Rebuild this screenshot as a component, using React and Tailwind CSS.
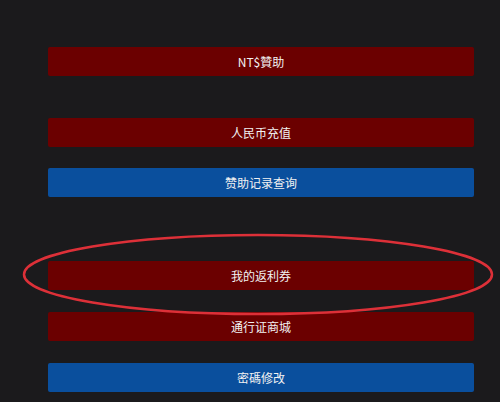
import React from "react";

const font = { fontFamily: '"Noto Sans CJK SC", "Noto Sans", sans-serif' };

function Btn({ children, blue, className = "" }) {
  return (
    <div
      className={`flex h-[29px] w-full items-center justify-center rounded-[2px] text-[12px] text-[#f2f2f2] ${
        blue ? "bg-[#0a4f9d]" : "bg-[#6b0000]"
      } ${className}`}
    >
      {children}
    </div>
  );
}

export default function App() {
  return (
    <div
      className="relative h-[402px] w-[500px] overflow-hidden bg-[#1b1a1c]"
      style={font}
    >
      <div className="flex flex-col pl-[48px] pr-[26px] pt-[47px]">
        <Btn>NT$贊助</Btn>
        <Btn className="mt-[42px]">人民币充值</Btn>
        <Btn blue className="mt-[21px]">赞助记录查询</Btn>
        <Btn className="mt-[64px]">我的返利券</Btn>
        <Btn className="mt-[22px] h-[28px]">通行证商城</Btn>
        <Btn blue className="mt-[22px] h-[28px]">密碼修改</Btn>
      </div>
      <svg
        className="pointer-events-none absolute left-[22px] top-[233px]"
        width="472"
        height="83"
        viewBox="0 0 472 83"
      >
        <ellipse
          cx="236"
          cy="41.5"
          rx="234"
          ry="39.5"
          fill="none"
          stroke="#dd3038"
          strokeWidth="2.5"
        />
      </svg>
    </div>
  );
}
